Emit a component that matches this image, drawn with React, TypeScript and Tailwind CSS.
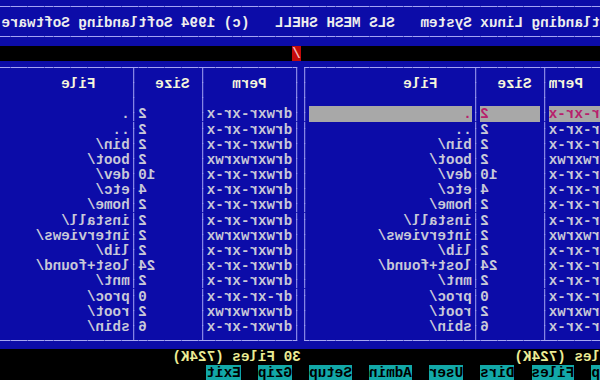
import React from 'react';

// The reference is a text-mode screen that was photographed mirrored,
// so the screen is built the normal way and flipped as a whole.

type Seg = [string, string];

const BLUE = 'bg-[#0c0ca8] text-[#c8c8d8]';
const HEAD = 'bg-[#0c0ca8] text-[#f6f6dc]';
const TITLE = 'bg-[#0c0ca8] text-[#eeeeee]';
const SEL = 'bg-[#a8a8a8] text-[#b8206c]';
const BLACK = 'bg-black text-[#c0c0c0]';
const COUNT = 'bg-black text-[#ecec94]';
const KEY = 'bg-[#12a8a8] text-black';
const CURSOR = 'bg-[#c40a0a] text-[#f4b4b4]';

const COLS = 71;

// up, down, left, right
const BOX: Record<string, [boolean, boolean, boolean, boolean]> = {
  '─': [false, false, true, true],
  '│': [true, true, false, false],
  '┌': [false, true, false, true],
  '┐': [false, true, true, false],
  '└': [true, false, false, true],
  '┘': [true, false, true, false],
  '┬': [false, true, true, true],
  '┴': [true, false, true, true],
};

const files: [string, string, string][] = [
  ['.', '2', 'drwxr-xr-x'],
  ['..', '2', 'drwxr-xr-x'],
  ['bin/', '2', 'drwxr-xr-x'],
  ['boot/', '2', 'drwxrwxrwx'],
  ['dev/', '10', 'drwxr-xr-x'],
  ['etc/', '4', 'drwxr-xr-x'],
  ['home/', '2', 'drwxr-xr-x'],
  ['install/', '2', 'drwxr-xr-x'],
  ['interviews/', '2', 'drwxrwxrwx'],
  ['lib/', '2', 'drwxr-xr-x'],
  ['lost+found/', '24', 'drwxr-xr-x'],
  ['mnt/', '2', 'drwxr-xr-x'],
  ['proc/', '0', 'dr-xr-xr-x'],
  ['root/', '2', 'drwxrwxrwx'],
  ['sbin/', '6', 'drwxr-xr-x'],
];

const keys = ['p', 'Files', 'Dirs', 'User', 'Admin', 'Setup', 'Gzip', 'Exit'];

function BoxChar({ ch, bg }: { ch: string; bg: string }) {
  const [u, d, l, r] = BOX[ch];
  return (
    <svg width="8.55" height="15.2" className={`shrink-0 ${bg}`}>
      {u && <rect x="3.8" y="0" width="1" height="7" fill="#a4a4f2" />}
      {d && <rect x="3.8" y="6" width="1" height="9.2" fill="#a4a4f2" />}
      {l && <rect x="0" y="6" width="4.8" height="1" fill="#a4a4f2" />}
      {r && <rect x="3.8" y="6" width="4.75" height="1" fill="#a4a4f2" />}
    </svg>
  );
}

function Row({ segs }: { segs: Seg[] }) {
  const out: React.ReactNode[] = [];
  segs.forEach(([text, cls], i) => {
    let run = '';
    let k = 0;
    const flush = () => {
      if (run) {
        out.push(
          <span key={`${i}-${k++}`} className={`shrink-0 ${cls}`}>
            {run}
          </span>
        );
        run = '';
      }
    };
    for (const ch of text) {
      if (BOX[ch]) {
        flush();
        out.push(<BoxChar key={`${i}-${k++}`} ch={ch} bg={cls} />);
      } else {
        run += ch;
      }
    }
    flush();
  });
  return <div className="flex h-[15.2px] overflow-hidden whitespace-pre leading-[17px]">{out}</div>;
}

function buildRows(): Seg[][] {
  const rows: Seg[][] = [];
  rows.push([['─'.repeat(COLS), BLUE]]);
  rows.push([['tlanding Linux System   SLS MESH SHELL   (c) 1994 Softlanding Software ', TITLE]]);
  rows.push([['─'.repeat(COLS), BLUE]]);
  rows.push([[' '.repeat(35), BLACK], ['/', CURSOR], [' '.repeat(35), BLACK]]);

  rows.push([
    ['─'.repeat(6) + '┬' + '─'.repeat(7) + '┬' + '─'.repeat(19) + '┐', BLUE],
    ['┌' + '─'.repeat(10) + '┬' + '─'.repeat(7) + '┬' + '─'.repeat(16), BLUE],
  ]);
  rows.push([
    ['  Perm', HEAD], ['│', BLUE], [' Size  ', HEAD], ['│', BLUE], ['    File'.padEnd(19), HEAD], ['│', BLUE],
    ['│', BLUE], ['   Perm   ', HEAD], ['│', BLUE], [' Size  ', HEAD], ['│', BLUE], ['    File'.padEnd(16), HEAD],
  ]);
  rows.push([
    ['      │       │                   │', BLUE],
    ['│          │       │                ', BLUE],
  ]);
  files.forEach(([name, size, perm], i) => {
    const c = i === 0 ? SEL : BLUE;
    rows.push([
      [perm.slice(4), c], ['│', BLUE], [size.padStart(7), c], ['│', BLUE], [name.padEnd(19), c], ['│', BLUE],
      ['│', BLUE], [perm, BLUE], ['│', BLUE], [size.padStart(7), BLUE], ['│', BLUE], [name.padEnd(16), BLUE],
    ]);
  });
  rows.push([
    ['─'.repeat(6) + '┴' + '─'.repeat(7) + '┴' + '─'.repeat(19) + '┘', BLUE],
    ['└' + '─'.repeat(10) + '┴' + '─'.repeat(7) + '┴' + '─'.repeat(16), BLUE],
  ]);
  rows.push([
    ['les (724K)', COUNT], [' '.repeat(25), BLACK], ['30 Files (724K)', COUNT], [' '.repeat(21), BLACK],
  ]);
  const bar: Seg[] = [];
  keys.forEach((k, i) => {
    if (i > 0) bar.push(['  ', BLACK]);
    bar.push([k, KEY]);
  });
  bar.push([' '.repeat(30), BLACK]);
  rows.push(bar);
  return rows;
}

export default function App() {
  const rows = buildRows();
  return (
    <div className="w-[600px] h-[380px] overflow-hidden bg-black -scale-x-100 font-['Liberation_Mono',monospace] text-[14.25px] font-bold">
      {rows.map((segs, i) => (
        <Row key={i} segs={segs} />
      ))}
    </div>
  );
}
